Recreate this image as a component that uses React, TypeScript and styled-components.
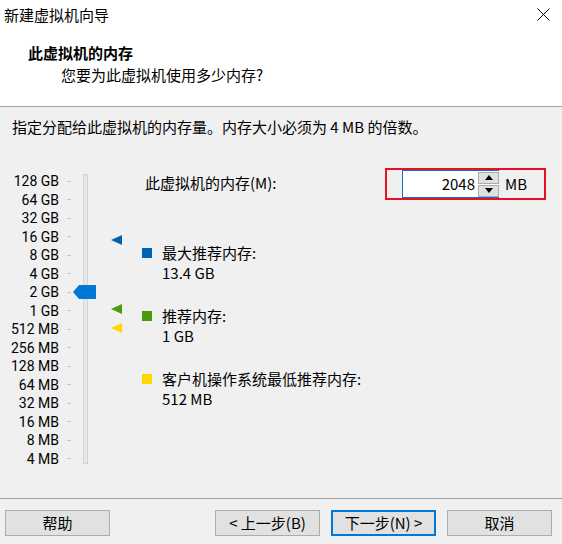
import React from "react";
import styled, {createGlobalStyle} from "styled-components";

const GlobalStyle = createGlobalStyle`
  html, body {
    margin: 0;
    padding: 0;
    background: #f0f0f0;
    overflow: hidden;
  }
  * {
    box-sizing: border-box;
  }
`

const TICK = 18.53
const TOP_PAD = 4

const scaleLabels = [
    "128 GB", "64 GB", "32 GB", "16 GB", "8 GB", "4 GB", "2 GB", "1 GB",
    "512 MB", "256 MB", "128 MB", "64 MB", "32 MB", "16 MB", "8 MB", "4 MB",
]

interface IMarker {
    index: number
    color: string
}
const markers: IMarker[] = [
    {index: 4 - Math.log2(13.4 / 8), color: "#0063b1"},
    {index: 7, color: "#4c9a0e"},
    {index: 8, color: "#ffd800"},
]

const legend = [
    {color: "#0063b1", title: "最大推荐内存:", value: "13.4 GB"},
    {color: "#4c9a0e", title: "推荐内存:", value: "1 GB"},
    {color: "#ffd800", title: "客户机操作系统最低推荐内存:", value: "512 MB"},
]

const rowCenter = (index: number) => TOP_PAD + index * TICK + TICK / 2

const App: React.FC = () => {
    return (
        <Window>
            <GlobalStyle/>
            <TitleBar>
                <TitleText>新建虚拟机向导</TitleText>
                <CloseButton>
                    <svg width="13" height="13" viewBox="0 0 13 13">
                        <path d="M0.5 0.5 L12.5 12.5 M12.5 0.5 L0.5 12.5" stroke="#000" strokeWidth="1"/>
                    </svg>
                </CloseButton>
            </TitleBar>
            <Header>
                <HeaderTitle>此虚拟机的内存</HeaderTitle>
                <HeaderSubtitle>您要为此虚拟机使用多少内存?</HeaderSubtitle>
            </Header>
            <Body>
                <Instruction>指定分配给此虚拟机的内存量。内存大小必须为 4 MB 的倍数。</Instruction>
                <Content>
                    <Scale>
                        <TickColumn>
                            {scaleLabels.map((label) => (
                                <TickRow key={label}>
                                    <TickLabel>{label}</TickLabel>
                                    <TickMark/>
                                </TickRow>
                            ))}
                        </TickColumn>
                        <Track/>
                        <Thumb style={{top: rowCenter(6) - 7}}>
                            <svg width="23" height="14" viewBox="0 0 23 14">
                                <polygon points="0,7 6,0 23,0 23,14 6,14" fill="#0078d7"/>
                            </svg>
                        </Thumb>
                        {markers.map((m) => (
                            <Marker key={m.color} style={{top: rowCenter(m.index) - 6.5}}>
                                <svg width="11" height="10" viewBox="0 0 11 10">
                                    <polygon points="0,5 11,0 11,10" fill={m.color}/>
                                </svg>
                            </Marker>
                        ))}
                    </Scale>
                    <Panel>
                        <MemoryRow>
                            <MemoryLabel>此虚拟机的内存(M):</MemoryLabel>
                            <HighlightBox>
                                <Edit>2048</Edit>
                                <Spinner>
                                    <SpinButton>
                                        <svg width="8" height="5" viewBox="0 0 8 5">
                                            <polygon points="4,0 8,5 0,5" fill="#000"/>
                                        </svg>
                                    </SpinButton>
                                    <SpinButton>
                                        <svg width="8" height="5" viewBox="0 0 8 5">
                                            <polygon points="0,0 8,0 4,5" fill="#000"/>
                                        </svg>
                                    </SpinButton>
                                </Spinner>
                                <Unit>MB</Unit>
                            </HighlightBox>
                        </MemoryRow>
                        <Legend>
                            {legend.map((item) => (
                                <LegendItem key={item.title}>
                                    <Swatch color={item.color}/>
                                    <LegendText>
                                        <LegendLine>{item.title}</LegendLine>
                                        <LegendLine>{item.value}</LegendLine>
                                    </LegendText>
                                </LegendItem>
                            ))}
                        </Legend>
                    </Panel>
                </Content>
            </Body>
            <Footer>
                <Button>帮助</Button>
                <Spacer/>
                <Button>&lt; 上一步(B)</Button>
                <Button primary>下一步(N) &gt;</Button>
                <Button>取消</Button>
            </Footer>
        </Window>
    )
}

const Window = styled.div`
  width: 562px;
  height: 544px;
  display: flex;
  flex-direction: column;
  background: #f0f0f0;
  font-family: "Noto Sans CJK SC", sans-serif;
  font-size: 15px;
  color: #000;
`
const TitleBar = styled.div`
  height: 30px;
  display: flex;
  align-items: center;
  justify-content: space-between;
  padding-left: 4px;
  padding-right: 12px;
  background: #fff;
`
const TitleText = styled.span`
  line-height: 20px;
`
const CloseButton = styled.div`
  width: 13px;
  height: 13px;
  display: flex;
  margin-top: -1px;
`
const Header = styled.div`
  height: 77px;
  background: #fff;
  border-bottom: 1px solid #a0a0a0;
  padding-top: 13px;
  display: flex;
  flex-direction: column;
`
const HeaderTitle = styled.div`
  font-weight: bold;
  line-height: 20px;
  padding-left: 28px;
`
const HeaderSubtitle = styled.div`
  line-height: 20px;
  margin-top: 2px;
  padding-left: 61px;
`
const Body = styled.div`
  flex: 1;
  display: flex;
  flex-direction: column;
  padding-top: 10px;
`
const Instruction = styled.div`
  line-height: 20px;
  padding-left: 12px;
`
const Content = styled.div`
  display: grid;
  grid-template-columns: 142px 1fr;
  margin-top: 31px;
`
const Scale = styled.div`
  position: relative;
  display: flex;
  align-items: flex-start;
  padding-top: ${TOP_PAD}px;
`
const TickColumn = styled.div`
  display: flex;
  flex-direction: column;
`
const TickRow = styled.div`
  height: ${TICK}px;
  display: flex;
  align-items: center;
`
const TickLabel = styled.span`
  width: 59px;
  text-align: right;
  font-family: Roboto, "Noto Sans", sans-serif;
  font-size: 14px;
  line-height: ${TICK}px;
  white-space: nowrap;
`
const TickMark = styled.span`
  width: 4px;
  height: 1px;
  margin-left: 8px;
  background: #c4c4c4;
`
const Track = styled.div`
  width: 5px;
  height: 290px;
  margin-left: 12px;
  margin-top: 2px;
  background: #e7e7e7;
  border: 1px solid #d4d4d4;
`
const Thumb = styled.div`
  position: absolute;
  left: 73px;
  width: 23px;
  height: 14px;
  display: flex;
`
const Marker = styled.div`
  position: absolute;
  left: 111px;
  width: 11px;
  height: 10px;
  display: flex;
`
const Panel = styled.div`
  display: flex;
  flex-direction: column;
  padding-right: 16px;
`
const MemoryRow = styled.div`
  display: flex;
  align-items: center;
  justify-content: space-between;
`
const MemoryLabel = styled.span`
  margin-left: 3px;
  line-height: 20px;
  margin-top: -2px;
`
const HighlightBox = styled.div`
  width: 161px;
  height: 32px;
  border: 2px solid #e81123;
  display: flex;
  align-items: center;
  padding-left: 15px;
`
const Edit = styled.div`
  width: 76px;
  height: 28px;
  border: 1px solid #0078d7;
  border-right: none;
  background: #fff;
  text-align: right;
  padding-right: 3px;
  line-height: 25px;
`
const Spinner = styled.div`
  width: 21px;
  height: 28px;
  display: flex;
  flex-direction: column;
  justify-content: center;
  gap: 1px;
  border-top: 1px solid #0078d7;
  border-bottom: 1px solid #0078d7;
  background: #fff;
`
const SpinButton = styled.div`
  height: 12px;
  display: flex;
  align-items: center;
  justify-content: center;
  background: #e1e1e1;
  border: 1px solid #adadad;
`
const Unit = styled.span`
  margin-left: 6px;
  line-height: 20px;
`
const Legend = styled.div`
  display: flex;
  flex-direction: column;
  gap: 24px;
  margin-top: 43px;
`
const LegendItem = styled.div`
  display: flex;
  align-items: flex-start;
`
const Swatch = styled.span<{ color: string }>`
  width: 10px;
  height: 10px;
  margin-top: 5px;
  background: ${(p) => p.color};
`
const LegendText = styled.div`
  display: flex;
  flex-direction: column;
  margin-left: 10px;
`
const LegendLine = styled.span`
  line-height: 19.5px;
  white-space: nowrap;
`
const Footer = styled.div`
  height: 46px;
  border-top: 1px solid #a0a0a0;
  display: flex;
  align-items: flex-start;
  gap: 11px;
  padding: 11px 10px 0 5px;
`
const Spacer = styled.div`
  flex: 1;
`
const Button = styled.button<{ primary?: boolean }>`
  width: 105px;
  height: 26px;
  padding: 0;
  background: #e1e1e1;
  border: ${(p) => (p.primary ? "2px solid #0078d7" : "1px solid #adadad")};
  font-family: "Noto Sans CJK SC", sans-serif;
  font-size: 15px;
  line-height: 20px;
  color: #000;
`

export default App
